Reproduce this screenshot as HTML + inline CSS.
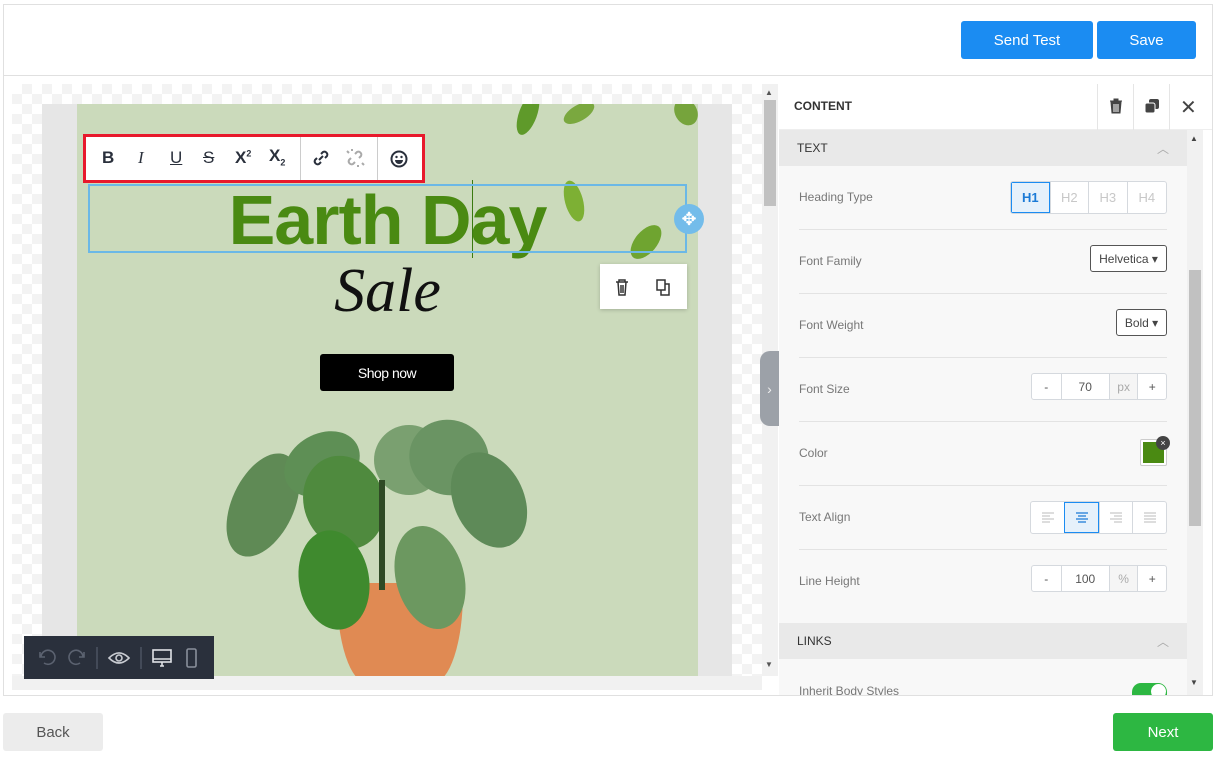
<!DOCTYPE html>
<html><head><meta charset="utf-8"><style>
*{box-sizing:border-box;margin:0;padding:0}
body{width:1218px;height:757px;background:#fff;font-family:"Liberation Sans",sans-serif;position:relative;overflow:hidden}
.abs{position:absolute}
.frame{left:3px;top:4px;width:1210px;height:692px;border:1px solid #e0e0e0}
.btn{position:absolute;color:#fff;font-size:15px;display:flex;align-items:center;justify-content:center;border-radius:3px}
.check{left:12px;top:84px;width:750px;height:592px;background-color:#fff;background-image:linear-gradient(45deg,#f3f3f3 25%,transparent 25%,transparent 75%,#f3f3f3 75%),linear-gradient(45deg,#f3f3f3 25%,transparent 25%,transparent 75%,#f3f3f3 75%);background-size:20px 20px;background-position:0 0,10px 10px}
.lbl{position:absolute;left:20px;font-size:12px;color:#777;white-space:nowrap}
.row{position:absolute;left:20px;width:368px;border-top:1px solid #e3e3e3}
.seg{position:absolute;display:flex;border:1px solid #d5d9de;border-radius:3px;background:#fff;overflow:hidden}
.seg div{display:flex;align-items:center;justify-content:center;border-left:1px solid #d5d9de;font-size:12px;color:#555;white-space:nowrap}
.seg div:first-child{border-left:none}
.tb{position:absolute;font-size:17px;color:#2a303c;font-weight:bold}
.lf{position:absolute;border-radius:50%}
</style></head><body>
<div class="abs frame"></div>
<div class="abs" style="left:3px;top:75px;width:1210px;height:1px;background:#e0e0e0"></div>
<div class="btn" style="left:961px;top:21px;width:132px;height:38px;background:#1b8cf2">Send Test</div>
<div class="btn" style="left:1097px;top:21px;width:99px;height:38px;background:#1b8cf2">Save</div>

<div class="abs check"></div>
<div class="abs" style="left:42px;top:104px;width:690px;height:572px;background:#e6e6e6"></div>
<div class="abs" style="left:77px;top:104px;width:621px;height:572px;background:#cbdabb;overflow:hidden">
 <div class="lf" style="left:442px;top:-12px;width:18px;height:44px;background:#5f9a2a;transform:rotate(20deg)"></div>
 <div class="lf" style="left:494px;top:-8px;width:16px;height:34px;background:#7aa83f;transform:rotate(60deg)"></div>
 <div class="lf" style="left:598px;top:-6px;width:22px;height:28px;background:#76a43c;transform:rotate(-30deg)"></div>
 <div class="lf" style="left:488px;top:76px;width:18px;height:42px;background:#7db034;transform:rotate(-15deg)"></div>
 <div class="lf" style="left:558px;top:118px;width:22px;height:40px;background:#6fa430;transform:rotate(40deg)"></div>
 <!-- plant -->
 <div class="abs" style="left:260px;top:479px;width:126px;height:100px;background:#e08a53;border-radius:4px 4px 30px 30px/4px 4px 90px 90px"></div>
 <div class="abs" style="left:147px;top:316px;width:330px;height:210px">
  <div class="lf" style="left:8px;top:30px;width:62px;height:110px;background:#5f8a55;transform:rotate(25deg)"></div>
  <div class="lf" style="left:58px;top:14px;width:80px;height:60px;background:#5e8f55;transform:rotate(-30deg)"></div>
  <div class="lf" style="left:80px;top:35px;width:80px;height:95px;background:#4f8a3e;transform:rotate(-20deg)"></div>
  <div class="lf" style="left:150px;top:5px;width:70px;height:70px;background:#7aa070"></div>
  <div class="lf" style="left:185px;top:0;width:80px;height:75px;background:#6a9463;transform:rotate(20deg)"></div>
  <div class="lf" style="left:230px;top:30px;width:70px;height:100px;background:#5e8a58;transform:rotate(-25deg)"></div>
  <div class="lf" style="left:75px;top:110px;width:70px;height:100px;background:#3f8a2e;transform:rotate(-10deg)"></div>
  <div class="lf" style="left:172px;top:105px;width:68px;height:105px;background:#6c9860;transform:rotate(-15deg)"></div>
  <div class="abs" style="left:155px;top:60px;width:6px;height:110px;background:#2f4a25"></div>
 </div>
 <div class="abs" style="left:0;width:621px;top:76px;text-align:center;font-size:70px;font-weight:bold;color:#4a8a12;line-height:80px;letter-spacing:-1px">Earth Day</div>
 <div class="abs" style="left:0;width:621px;top:152px;text-align:center;font-family:'Liberation Serif',serif;font-style:italic;font-size:62px;color:#111;line-height:70px">Sale</div>
 <div class="abs" style="left:243px;top:250px;width:134px;height:37px;background:#000;border-radius:3px;color:#fff;font-size:14px;display:flex;align-items:center;justify-content:center;letter-spacing:-0.5px">Shop now</div>
</div>
<div class="abs" style="left:472px;top:180px;width:1px;height:78px;background:#3a7a10"></div>
<div class="abs" style="left:88px;top:184px;width:599px;height:69px;border:2px solid #6bb8e6"></div>
<div class="abs" style="left:674px;top:204px;width:30px;height:30px;border-radius:50%;background:#73bcea;color:#fff;font-size:18px;display:flex;align-items:center;justify-content:center">✥</div>
<div class="abs" style="left:600px;top:264px;width:87px;height:45px;background:#fff;box-shadow:0 1px 4px rgba(0,0,0,.2)">
 <svg width="87" height="45" viewBox="0 0 87 45"><g fill="none" stroke="#333" stroke-width="1.5"><path d="M16 18h12M19 18v-2h6v2M18 18l1 13h6l1-13M21 21v8M23 21v8"/><rect x="57" y="16" width="8" height="10"/><path d="M65 20h4v11h-8v-5"/></g></svg>
</div>
<div class="abs" style="left:83px;top:134px;width:342px;height:49px;border:3px solid #e8192c;background:#fff"></div>
<div class="abs" style="left:300px;top:137px;width:1px;height:43px;background:#ccc"></div>
<div class="abs" style="left:377px;top:137px;width:1px;height:43px;background:#ccc"></div>
<div class="tb" style="left:102px;top:148px">B</div>
<div class="tb" style="left:138px;top:148px;font-family:'Liberation Serif',serif;font-style:italic;font-weight:normal">I</div>
<div class="tb" style="left:170px;top:148px;text-decoration:underline;font-weight:normal">U</div>
<div class="tb" style="left:203px;top:148px;text-decoration:line-through;font-weight:normal">S</div>
<div class="tb" style="left:235px;top:148px">X<sup style="font-size:9px">2</sup></div>
<div class="tb" style="left:269px;top:146px">X<sub style="font-size:9px">2</sub></div>
<svg class="abs" style="left:310px;top:147px" width="22" height="22" viewBox="0 0 22 22"><g fill="none" stroke="#2a303c" stroke-width="2"><path d="M9 13l4-4M7 11l-2 2a3 3 0 004 4l2-2M15 11l2-2a3 3 0 00-4-4l-2 2"/></g></svg>
<svg class="abs" style="left:344px;top:147px" width="22" height="22" viewBox="0 0 22 22"><g fill="none" stroke="#aaa" stroke-width="2"><path d="M7 11l-2 2a3 3 0 004 4l2-2M15 11l2-2a3 3 0 00-4-4l-2 2M3 4l2 2M18 16l2 2M8 2v2M14 18v2"/></g></svg>
<svg class="abs" style="left:389px;top:149px" width="20" height="20" viewBox="0 0 20 20"><circle cx="10" cy="10" r="7.5" fill="none" stroke="#2a303c" stroke-width="2"/><circle cx="7.5" cy="8" r="1.2" fill="#2a303c"/><circle cx="12.5" cy="8" r="1.2" fill="#2a303c"/><path d="M6 11h8a4 4 0 01-8 0z" fill="#2a303c"/></svg>

<div class="abs" style="left:762px;top:84px;width:16px;height:592px;background:#f1f1f1"></div>
<div class="abs" style="left:764px;top:100px;width:12px;height:106px;background:#c1c1c1"></div>
<div class="abs" style="left:765px;top:88px;font-size:8px;color:#555">▲</div>
<div class="abs" style="left:765px;top:660px;font-size:8px;color:#555">▼</div>
<div class="abs" style="left:12px;top:676px;width:750px;height:14px;background:#f1f1f1"></div>
<div class="abs" style="left:760px;top:351px;width:19px;height:75px;background:#9ca1a8;border-radius:10px 0 0 10px;color:#eee;font-size:14px;display:flex;align-items:center;justify-content:center">›</div>
<div class="abs" style="left:24px;top:636px;width:190px;height:43px;background:#2a303c"></div>
<svg class="abs" style="left:24px;top:636px" width="190" height="43" viewBox="0 0 190 43"><g fill="none" stroke-width="1.6"><path stroke="#5b6270" d="M16 16v5h5M17 21a7 7 0 113 6"/><path stroke="#5b6270" d="M60 16v5h-5M59 21a7 7 0 10-3 6"/><path stroke="#4a5160" d="M73 11v22M117 11v22"/><path stroke="#c9ccd2" d="M85 22q10-10 20 0q-10 10-20 0z"/><circle cx="95" cy="22" r="3" stroke="#c9ccd2"/><rect x="129" y="14" width="18" height="12" stroke="#e0e2e6"/><path stroke="#e0e2e6" d="M129 23h18M136 30h4M138 26v4"/><rect x="163" y="13" width="9" height="18" rx="1.5" stroke="#8a909b"/></g></svg>

<div class="abs" style="left:779px;top:84px;width:433px;height:46px;background:#fff;border-bottom:1px solid #eee"></div>
<div class="abs" style="left:794px;top:99px;font-size:12px;font-weight:bold;color:#333">CONTENT</div>
<div class="abs" style="left:1097px;top:84px;width:1px;height:46px;background:#e5e5e5"></div>
<div class="abs" style="left:1133px;top:84px;width:1px;height:46px;background:#e5e5e5"></div>
<div class="abs" style="left:1169px;top:84px;width:1px;height:46px;background:#e5e5e5"></div>
<svg class="abs" style="left:1106px;top:96px" width="20" height="20" viewBox="0 0 20 20"><path d="M4 5h12M8 5V3h4v2M5 6h10l-1 11H6z" fill="#444" stroke="#444"/><path d="M8 8v8M10 8v8M12 8v8" stroke="#fff"/></svg>
<svg class="abs" style="left:1142px;top:96px" width="20" height="20" viewBox="0 0 20 20"><rect x="7" y="3" width="10" height="10" rx="2" fill="#444"/><rect x="3" y="7" width="10" height="10" rx="2" fill="#444" stroke="#fff"/></svg>
<div class="abs" style="left:1180px;top:95px;font-size:20px;color:#444">✕</div>

<div class="abs" style="left:779px;top:130px;width:408px;height:566px;background:#f8f8f8"></div>
<div class="abs" style="left:779px;top:130px;width:408px;height:36px;background:#e9e9e9"></div>
<div class="abs" style="left:797px;top:141px;font-size:12px;color:#333">TEXT</div>
<div class="abs" style="left:1157px;top:140px;font-size:12px;color:#aaa">︿</div>
<div class="abs" style="left:1187px;top:130px;width:16px;height:566px;background:#f1f1f1"></div>
<div class="abs" style="left:1189px;top:270px;width:12px;height:256px;background:#c1c1c1"></div>
<div class="abs" style="left:1190px;top:134px;font-size:8px;color:#444">▲</div>
<div class="abs" style="left:1190px;top:678px;font-size:8px;color:#444">▼</div>

<div style="position:absolute;left:779px;top:0;width:420px">
 <div class="lbl" style="top:190px">Heading Type</div>
 <div class="seg" style="left:231px;top:181px;width:157px;height:33px">
  <div style="width:39px;background:#e6f1fb;color:#1b7ad6;border:1px solid #1b8cf2;font-weight:bold;font-size:13px">H1</div>
  <div style="width:39px;color:#c8c8c8;font-size:13px">H2</div><div style="width:39px;color:#c8c8c8;font-size:13px">H3</div><div style="width:40px;color:#c8c8c8;font-size:13px">H4</div>
 </div>
 <div class="row" style="top:229px"></div>
 <div class="lbl" style="top:254px">Font Family</div>
 <div class="seg" style="left:311px;top:245px;width:77px;height:27px;border-color:#555"><div style="width:100%;color:#444">Helvetica ▾</div></div>
 <div class="row" style="top:293px"></div>
 <div class="lbl" style="top:318px">Font Weight</div>
 <div class="seg" style="left:337px;top:309px;width:51px;height:27px;border-color:#555"><div style="width:100%;color:#444">Bold ▾</div></div>
 <div class="row" style="top:357px"></div>
 <div class="lbl" style="top:382px">Font Size</div>
 <div class="seg" style="left:252px;top:373px;width:136px;height:27px"><div style="width:29px">-</div><div style="width:49px">70</div><div style="width:29px;background:#f5f5f5;color:#aaa">px</div><div style="width:29px">+</div></div>
 <div class="row" style="top:421px"></div>
 <div class="lbl" style="top:446px">Color</div>
 <div class="abs" style="left:361px;top:439px;width:27px;height:27px;border:1px solid #ccc;border-radius:2px;background:#fff;padding:2px"><div style="width:100%;height:100%;background:#4a8a12"></div></div>
 <div class="abs" style="left:377px;top:436px;width:14px;height:14px;border-radius:50%;background:#444;color:#fff;font-size:9px;text-align:center;line-height:14px">×</div>
 <div class="row" style="top:485px"></div>
 <div class="lbl" style="top:510px">Text Align</div>
 <div class="seg" style="left:251px;top:501px;width:137px;height:33px">
  <div style="width:34px"><svg width="14" height="12"><path d="M1 1h12M1 4h8M1 7h12M1 10h8" stroke="#bbb"/></svg></div>
  <div style="width:35px;background:#e6f1fb;border:1px solid #1b8cf2"><svg width="14" height="12"><path d="M1 1h12M3 4h8M1 7h12M3 10h8" stroke="#1b7ad6" stroke-width="1.3"/></svg></div>
  <div style="width:34px"><svg width="14" height="12"><path d="M1 1h12M5 4h8M1 7h12M5 10h8" stroke="#bbb"/></svg></div>
  <div style="width:34px"><svg width="14" height="12"><path d="M1 1h12M1 4h12M1 7h12M1 10h12" stroke="#bbb"/></svg></div>
 </div>
 <div class="row" style="top:549px"></div>
 <div class="lbl" style="top:574px">Line Height</div>
 <div class="seg" style="left:252px;top:565px;width:136px;height:27px"><div style="width:29px">-</div><div style="width:49px">100</div><div style="width:29px;background:#f5f5f5;color:#aaa">%</div><div style="width:29px">+</div></div>
</div>
<div class="abs" style="left:779px;top:623px;width:408px;height:36px;background:#e9e9e9"></div>
<div class="abs" style="left:797px;top:634px;font-size:12px;color:#333">LINKS</div>
<div class="abs" style="left:1157px;top:633px;font-size:12px;color:#aaa">︿</div>
<div class="abs" style="left:799px;top:684px;font-size:12px;color:#777;height:11px;overflow:hidden;line-height:14px;white-space:nowrap">Inherit Body Styles</div>
<div class="abs" style="left:1132px;top:683px;width:35px;height:13px;background:#2db742;border-radius:9px 9px 0 0;overflow:hidden"><div style="position:absolute;left:19px;top:1px;width:15px;height:15px;border-radius:50%;background:#fff"></div></div>

<div class="abs" style="left:3px;top:695px;width:1210px;height:1px;background:#e0e0e0"></div>
<div class="btn" style="left:3px;top:713px;width:100px;height:38px;background:#ececec;color:#555">Back</div>
<div class="btn" style="left:1113px;top:713px;width:100px;height:38px;background:#2db742">Next</div>
</body></html>
